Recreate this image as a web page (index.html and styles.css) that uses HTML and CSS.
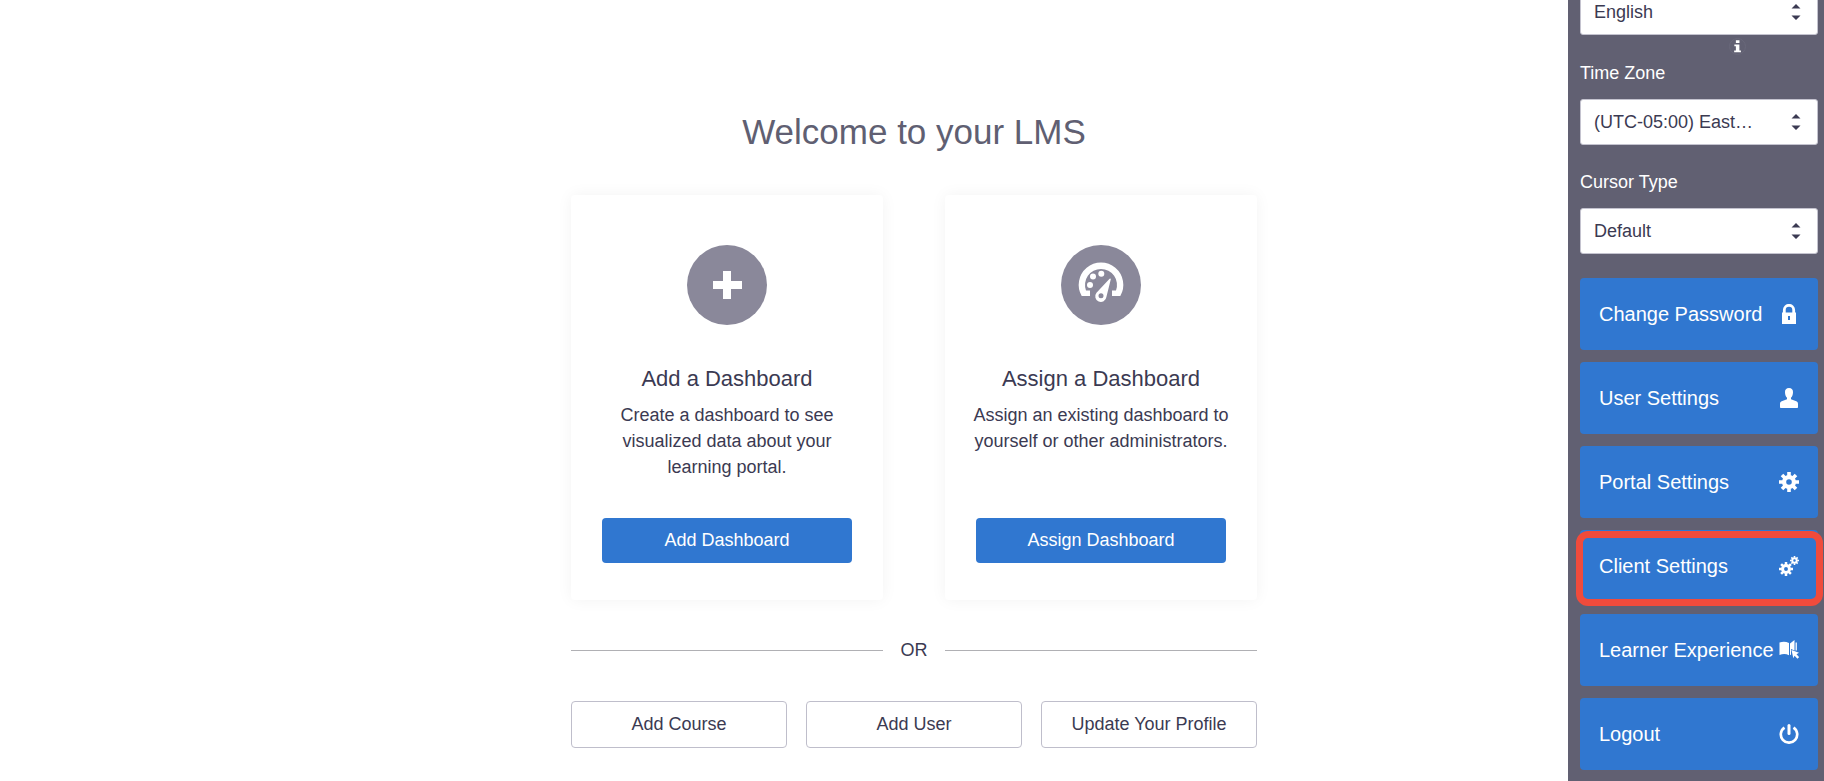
FILE: index.html
```html
<!DOCTYPE html>
<html lang="en">
<head>
<meta charset="utf-8">
<title>Welcome to your LMS</title>
<link rel="stylesheet" href="styles.css">
</head>
<body>
<svg class="sprite" aria-hidden="true">
  <symbol id="cog" viewBox="0 0 20 20">
    <circle cx="10" cy="10" r="4.9" fill="none" stroke="currentColor" stroke-width="4.2"/>
    <path d="M10 0v4M10 16v4M0 10h4M16 10h4M3 3l3 3M14 14l3 3M17 3l-3 3M6 14l-3 3" stroke="currentColor" stroke-width="3.6"/>
  </symbol>
  <symbol id="sort" viewBox="0 0 10 18">
    <path d="M5 1L9.500 5.500h-9zM5 17L.5 12.500h9z" fill="currentColor"/>
  </symbol>
</svg>

<main class="main">
  <div class="welcome">
    <h1 class="title">Welcome to your LMS</h1>

    <div class="cards">
      <section class="card">
        <svg class="badge" viewBox="0 0 80 80" aria-hidden="true">
          <circle class="badge-disc" cx="40" cy="40" r="40"/>
          <path d="M36 26h8v10h11v8H44v10h-8V44H26v-8h10z" fill="#fff"/>
        </svg>
        <h2 class="card-title">Add a Dashboard</h2>
        <p class="card-text">Create a dashboard to see visualized data about your learning portal.</p>
        <button class="primary" type="button">Add Dashboard</button>
      </section>
      <section class="card">
        <svg class="badge" viewBox="0 0 80 80" aria-hidden="true">
          <circle class="badge-disc" cx="40" cy="40" r="40"/>
          <path d="M20.700 51A22.300 22.300 0 1 1 59.300 51H51V45.500H55A16 16 0 1 0 25 45.500H29V51Z" fill="#fff"/>
          <circle cx="29" cy="40" r="3" fill="#fff"/>
          <circle cx="32" cy="31.500" r="3" fill="#fff"/>
          <circle cx="40.300" cy="28.700" r="3" fill="#fff"/>
          <path fill-rule="evenodd" d="M49.800 34.200L45.400 52A5.600 5.600 0 1 1 35.500 47.800L48.600 33.800Q49.600 33 49.800 34.200ZM40 48.200a2.500 2.500 0 1 0 0 5a2.500 2.500 0 0 0 0-5z" fill="#fff"/>
        </svg>
        <h2 class="card-title">Assign a Dashboard</h2>
        <p class="card-text">Assign an existing dashboard to yourself or other administrators.</p>
        <button class="primary" type="button">Assign Dashboard</button>
      </section>
    </div>

    <div class="divider"><span>OR</span></div>

    <div class="actions">
      <button class="secondary" type="button">Add Course</button>
      <button class="secondary" type="button">Add User</button>
      <button class="secondary" type="button">Update Your Profile</button>
    </div>
  </div>
</main>

<aside class="sidebar">
  <div class="select">
    <select aria-label="Language"><option>English</option></select>
    <svg class="arrows" aria-hidden="true"><use href="#sort"/></svg>
  </div>
  <div class="info-row">
    <button class="info" type="button" aria-label="Information">
      <svg viewBox="0 0 10 14" aria-hidden="true"><path d="M3.200 0h4v3h-4zM1.500 4.800h5.600v6.700h1.700v2H1.300v-2h1.900V6.800H1.500z" fill="currentColor"/></svg>
    </button>
  </div>
  <div class="field">
    <label for="zone">Time Zone</label>
    <div class="select">
      <select id="zone"><option>(UTC-05:00) East…</option></select>
      <svg class="arrows" aria-hidden="true"><use href="#sort"/></svg>
    </div>
  </div>
  <div class="field">
    <label for="cursor">Cursor Type</label>
    <div class="select">
      <select id="cursor"><option>Default</option></select>
      <svg class="arrows" aria-hidden="true"><use href="#sort"/></svg>
    </div>
  </div>
  <nav class="menu">
    <button class="item" type="button"><span>Change Password</span>
      <svg class="icon" viewBox="0 0 20 20" aria-hidden="true">
        <path d="M5.300 9V6a4.700 4.700 0 0 1 9.400 0v3" fill="none" stroke="currentColor" stroke-width="2.800"/>
        <path fill-rule="evenodd" d="M3 8.500h14V20H3zM9 12v4h2v-4z" fill="currentColor"/>
      </svg>
    </button>
    <button class="item" type="button"><span>User Settings</span>
      <svg class="icon" viewBox="0 0 20 20" aria-hidden="true">
        <path d="M10 0C7.300 0 5.800 1.800 6 4.200c.1 2.600.7 4.300 2 5.600v1.500l-5.300 2C1.500 13.800 1 14.600 1 16v3.200c0 .5.300.8.800.8h16.400c.5 0 .8-.3.800-.8V16c0-1.400-.5-2.200-1.700-2.700l-5.300-2V9.800c1.300-1.300 1.900-3 2-5.600C14.200 1.800 12.700 0 10 0z" fill="currentColor"/>
      </svg>
    </button>
    <button class="item" type="button"><span>Portal Settings</span>
      <svg class="icon" aria-hidden="true"><use href="#cog"/></svg>
    </button>
    <button class="item highlighted" type="button"><span>Client Settings</span>
      <svg class="icon" viewBox="0 0 20 20" aria-hidden="true">
        <use href="#cog" x="0" y="6" width="14" height="14"/>
        <use href="#cog" x="11" y="0" width="9" height="9"/>
      </svg>
    </button>
    <button class="item" type="button"><span>Learner Experience</span>
      <svg class="icon" viewBox="0 0 20 20" aria-hidden="true">
        <path d="M.5 2.500C4 1.300 7 1.500 10 3v12.200C7 13.800 4 13.700.5 15zM11 3.500L15.500 0v10.500L12 9v5.500l-1 .7z" fill="currentColor"/>
        <path d="M17.200 2.500v8" fill="none" stroke="currentColor" stroke-width="1.300"/>
        <path d="M12.500 10l7.500 2.700-2.500 1.500 2.700 2.900-1.800 1.700-2.800-3-1.300 2.500z" fill="currentColor"/>
      </svg>
    </button>
    <button class="item" type="button"><span>Logout</span>
      <svg class="icon" viewBox="0 0 20 20" aria-hidden="true">
        <path d="M5.500 3.600a8.200 8.200 0 1 0 9 0" fill="none" stroke="currentColor" stroke-width="2.700"/>
        <path d="M10 1.500v8" stroke="currentColor" stroke-width="3" stroke-linecap="round"/>
      </svg>
    </button>
  </nav>
</aside>
</body>
</html>
```
FILE: styles.css
```css
* {
  box-sizing: border-box;
}

body {
  margin: 0;
  background: #fff;
  color: #3b3a52;
  font-family: "Liberation Sans", Arial, sans-serif;
  font-size: 18px;
  line-height: 26px;
}

button,
select {
  font: inherit;
  cursor: pointer;
}

h1,
h2,
p {
  margin: 0;
  font-weight: 400;
}

.sprite {
  display: none;
}

.main {
  min-height: 100vh;
  overflow: hidden;
  padding: 109px 0 32px 4px;
}

.welcome {
  max-width: 686px;
  margin: 0 auto;
  text-align: center;
}

.title {
  color: #605f72;
  font-size: 35px;
  line-height: 45px;
}

.cards {
  display: grid;
  grid-template-columns: 1fr 1fr;
  gap: 62px;
  margin-top: 41px;
}

.card {
  display: flex;
  flex-direction: column;
  align-items: center;
  padding: 50px 24px 37px;
  border-radius: 4px;
  background: #fff;
  box-shadow: 0 0 16px rgba(0, 0, 0, 0.05);
}

.badge {
  width: 80px;
  height: 80px;
}

.badge-disc {
  fill: #8a889a;
}

.card-title {
  margin-top: 39px;
  font-size: 22px;
  line-height: 30px;
}

.card-text {
  margin: 8px 0 38px;
}

.primary {
  width: 250px;
  max-width: 100%;
  height: 45px;
  margin-top: auto;
  padding: 0 0 2px;
  border: 0;
  border-radius: 4px;
  background: #3077d0;
  color: #fff;
}

.divider {
  display: grid;
  grid-template-columns: 1fr 62px 1fr;
  align-items: center;
  margin-top: 37px;
}

.divider::before,
.divider::after {
  content: "";
  height: 1px;
  background: #b0b0b4;
}

.actions {
  display: grid;
  grid-template-columns: repeat(3, 1fr);
  gap: 19px;
  margin-top: 38px;
}

.secondary {
  height: 47px;
  padding: 0 0 2px;
  border: 1px solid #bfbecb;
  border-radius: 4px;
  background: #fff;
  color: #3b3a52;
}

.sidebar {
  position: fixed;
  top: 0;
  right: 0;
  bottom: 0;
  display: flex;
  flex-direction: column;
  justify-content: flex-end;
  width: 256px;
  padding: 0 6px 11px 12px;
  overflow: hidden;
  background: #616072;
  color: #fff;
}

.sidebar > * {
  flex-shrink: 0;
}

.select {
  position: relative;
}

.select select {
  display: block;
  width: 100%;
  height: 46px;
  padding: 0 40px 0 13px;
  border: 1px solid #c4c3cf;
  border-radius: 3px;
  appearance: none;
  background: #fff;
  color: #3b3a52;
}

.arrows {
  position: absolute;
  top: 14px;
  right: 17px;
  width: 10px;
  height: 18px;
  color: #3b3a52;
  pointer-events: none;
}

.info-row {
  display: flex;
  justify-content: flex-end;
  height: 25px;
  padding: 3px 72px 0 0;
}

.info {
  display: grid;
  place-items: center;
  width: 17px;
  height: 17px;
  padding: 0;
  border: 1px solid #69687a;
  border-radius: 50%;
  background: none;
  color: #fff;
}

.info svg {
  width: 9px;
  height: 13px;
}

.field {
  margin-bottom: 24px;
}

.field label {
  display: block;
  margin-bottom: 13px;
}

.menu {
  display: grid;
  gap: 12px;
}

.item {
  position: relative;
  display: flex;
  align-items: center;
  justify-content: space-between;
  height: 72px;
  padding: 0 19px;
  border: 0;
  border-radius: 4px;
  background: #3077d0;
  color: #fff;
  font-size: 20px;
  white-space: nowrap;
}

.icon {
  flex: none;
  width: 20px;
  height: 20px;
}

.highlighted::after {
  content: "";
  position: absolute;
  inset: 1px -5px -4px -4px;
  border: 7px solid #f04b3c;
  border-radius: 12px;
}
```
